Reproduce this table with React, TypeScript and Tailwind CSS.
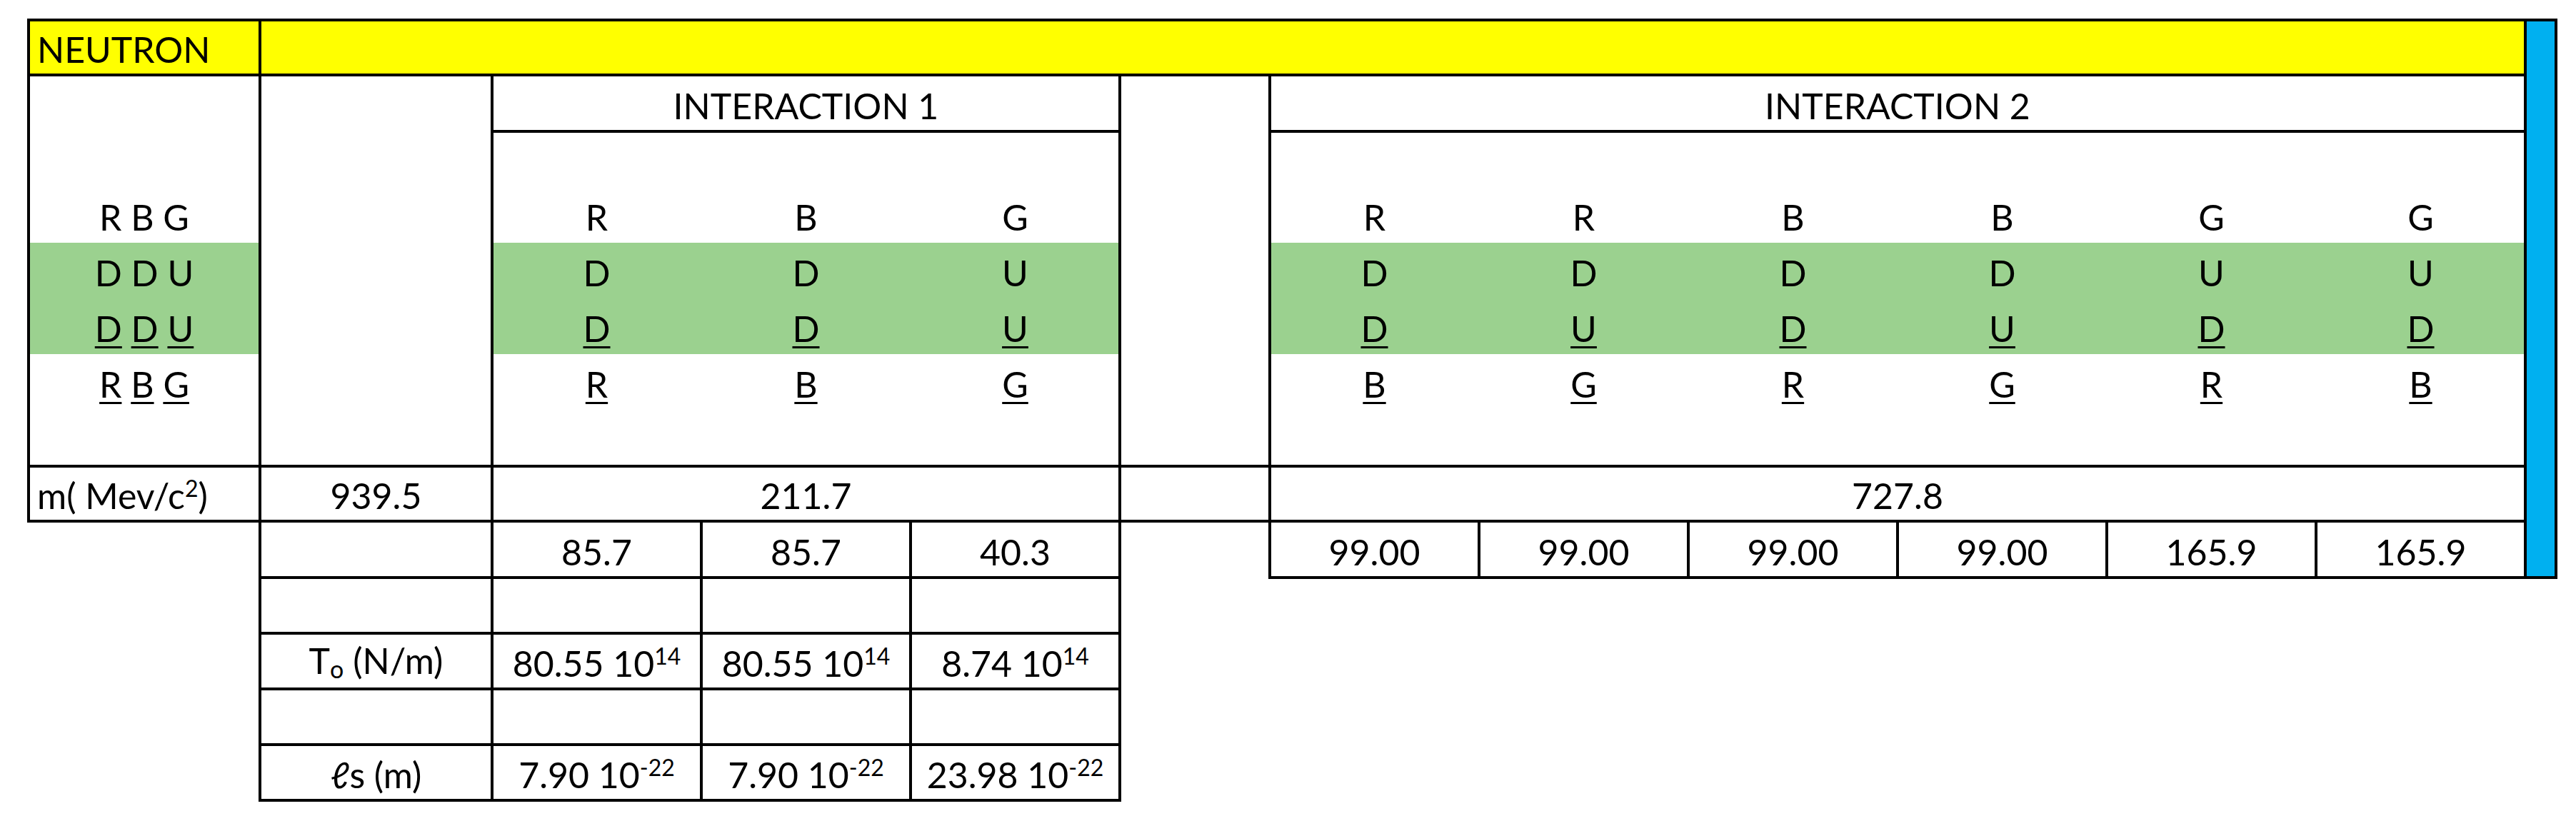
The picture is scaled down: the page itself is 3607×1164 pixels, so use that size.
import React from "react";

const F = "-m-[2px] border-4 border-black";

function Sup({ children }: { children: React.ReactNode }) {
  return <span className="text-[32px] align-[17px]">{children}</span>;
}

function U({ children }: { children: React.ReactNode }) {
  return (
    <span className="underline decoration-[3px] underline-offset-[6px]">{children}</span>
  );
}

function Cell({
  className,
  children,
  left,
}: {
  className: string;
  children?: React.ReactNode;
  left?: boolean;
}) {
  return (
    <div
      className={`${className} flex items-end ${
        left ? "justify-start pl-[12px]" : "justify-center"
      } pb-[11px] text-[50px] leading-none whitespace-nowrap`}
    >
      <span className="leading-none">{children}</span>
    </div>
  );
}

const i1Cols = ["col-start-3", "col-start-4", "col-start-5"];
const i2Cols = [
  "col-start-7",
  "col-start-8",
  "col-start-9",
  "col-start-10",
  "col-start-11",
  "col-start-12",
];

export default function App() {
  const i1 = [
    { row: "row-start-4", v: ["R", "B", "G"], u: false },
    { row: "row-start-5", v: ["D", "D", "U"], u: false },
    { row: "row-start-6", v: ["D", "D", "U"], u: true },
    { row: "row-start-7", v: ["R", "B", "G"], u: true },
  ];
  const i2 = [
    { row: "row-start-4", v: ["R", "R", "B", "B", "G", "G"], u: false },
    { row: "row-start-5", v: ["D", "D", "D", "D", "U", "U"], u: false },
    { row: "row-start-6", v: ["D", "U", "D", "U", "D", "D"], u: true },
    { row: "row-start-7", v: ["B", "G", "R", "G", "R", "B"], u: true },
  ];
  const i2vals = ["99.00", "99.00", "99.00", "99.00", "165.9", "165.9"];

  return (
    <div
      className="min-h-[1164px] w-[3607px] bg-white pl-[40px] pt-[28px] text-black"
      style={{ fontFamily: "Lato, 'Noto Sans', 'DejaVu Sans', sans-serif" }}
    >
      <div className="grid grid-cols-[324px_325px_293px_293px_293px_210px_293px_293px_293px_293px_293px_293px_43px] grid-rows-[77px_79px_78px_78px_78px_78px_78px_79px_77px_79px_78px_78px_78px_78px]">
        {/* fills */}
        <div className="col-start-1 col-end-13 row-start-1 row-end-2 bg-[#ffff00]" />
        <div className="col-start-13 col-end-14 row-start-1 row-end-11 bg-[#00b0f0]" />
        <div className="col-start-1 col-end-2 row-start-5 row-end-7 bg-[#9bd18f]" />
        <div className="col-start-3 col-end-6 row-start-5 row-end-7 bg-[#9bd18f]" />
        <div className="col-start-7 col-end-13 row-start-5 row-end-7 bg-[#9bd18f]" />

        {/* texts */}
        <Cell className="col-start-1 col-end-2 row-start-1 row-end-2" left>
          NEUTRON
        </Cell>
        <Cell className="col-start-3 col-end-6 row-start-2 row-end-3">INTERACTION 1</Cell>
        <Cell className="col-start-7 col-end-13 row-start-2 row-end-3">INTERACTION 2</Cell>

        <Cell className="col-start-1 col-end-2 row-start-4 row-end-5">R B G</Cell>
        <Cell className="col-start-1 col-end-2 row-start-5 row-end-6">D D U</Cell>
        <Cell className="col-start-1 col-end-2 row-start-6 row-end-7">
          <U>D</U> <U>D</U> <U>U</U>
        </Cell>
        <Cell className="col-start-1 col-end-2 row-start-7 row-end-8">
          <U>R</U> <U>B</U> <U>G</U>
        </Cell>

        {i1.map((r) =>
          r.v.map((t, i) => (
            <Cell key={`i1-${r.row}-${i}`} className={`${i1Cols[i]} ${r.row}`}>
              {r.u ? <U>{t}</U> : t}
            </Cell>
          ))
        )}
        {i2.map((r) =>
          r.v.map((t, i) => (
            <Cell key={`i2-${r.row}-${i}`} className={`${i2Cols[i]} ${r.row}`}>
              {r.u ? <U>{t}</U> : t}
            </Cell>
          ))
        )}

        <Cell className="col-start-1 col-end-2 row-start-9 row-end-10" left>
          m( Mev/c<Sup>2</Sup>)
        </Cell>
        <Cell className="col-start-2 col-end-3 row-start-9 row-end-10">939.5</Cell>
        <Cell className="col-start-3 col-end-6 row-start-9 row-end-10">211.7</Cell>
        <Cell className="col-start-7 col-end-13 row-start-9 row-end-10">727.8</Cell>

        <Cell className="col-start-3 row-start-10">85.7</Cell>
        <Cell className="col-start-4 row-start-10">85.7</Cell>
        <Cell className="col-start-5 row-start-10">40.3</Cell>
        {i2vals.map((v, i) => (
          <Cell key={`v-${i}`} className={`${i2Cols[i]} row-start-10`}>
            {v}
          </Cell>
        ))}

        <Cell className="col-start-2 row-start-12">
          T<span className="text-[34px] align-[-6px]">o</span> (N/m)
        </Cell>
        <Cell className="col-start-3 row-start-12">
          80.55 10<Sup>14</Sup>
        </Cell>
        <Cell className="col-start-4 row-start-12">
          80.55 10<Sup>14</Sup>
        </Cell>
        <Cell className="col-start-5 row-start-12">
          8.74 10<Sup>14</Sup>
        </Cell>

        <Cell className="col-start-2 row-start-14">ℓs (m)</Cell>
        <Cell className="col-start-3 row-start-14">
          7.90 10<Sup>-22</Sup>
        </Cell>
        <Cell className="col-start-4 row-start-14">
          7.90 10<Sup>-22</Sup>
        </Cell>
        <Cell className="col-start-5 row-start-14">
          23.98 10<Sup>-22</Sup>
        </Cell>

        {/* frames */}
        <div className={`${F} col-start-1 col-end-2 row-start-1 row-end-2`} />
        <div className={`${F} col-start-2 col-end-13 row-start-1 row-end-2`} />
        <div className={`${F} col-start-13 col-end-14 row-start-1 row-end-11`} />

        <div className={`${F} col-start-1 col-end-2 row-start-2 row-end-9`} />
        <div className={`${F} col-start-2 col-end-3 row-start-2 row-end-9`} />
        <div className={`${F} col-start-6 col-end-7 row-start-2 row-end-9`} />
        <div className={`${F} col-start-3 col-end-6 row-start-2 row-end-3`} />
        <div className={`${F} col-start-3 col-end-6 row-start-3 row-end-9`} />
        <div className={`${F} col-start-7 col-end-13 row-start-2 row-end-3`} />
        <div className={`${F} col-start-7 col-end-13 row-start-3 row-end-9`} />

        <div className={`${F} col-start-1 col-end-2 row-start-9 row-end-10`} />
        <div className={`${F} col-start-2 col-end-3 row-start-9 row-end-10`} />
        <div className={`${F} col-start-3 col-end-6 row-start-9 row-end-10`} />
        <div className={`${F} col-start-6 col-end-7 row-start-9 row-end-10`} />
        <div className={`${F} col-start-7 col-end-13 row-start-9 row-end-10`} />

        {["row-start-10", "row-start-11", "row-start-12", "row-start-13", "row-start-14"].map(
          (r) =>
            ["col-start-2", "col-start-3", "col-start-4", "col-start-5"].map((c) => (
              <div key={`f-${r}-${c}`} className={`${F} ${c} ${r}`} />
            ))
        )}
        {i2Cols.map((c) => (
          <div key={`f2-${c}`} className={`${F} ${c} row-start-10`} />
        ))}
      </div>
    </div>
  );
}
